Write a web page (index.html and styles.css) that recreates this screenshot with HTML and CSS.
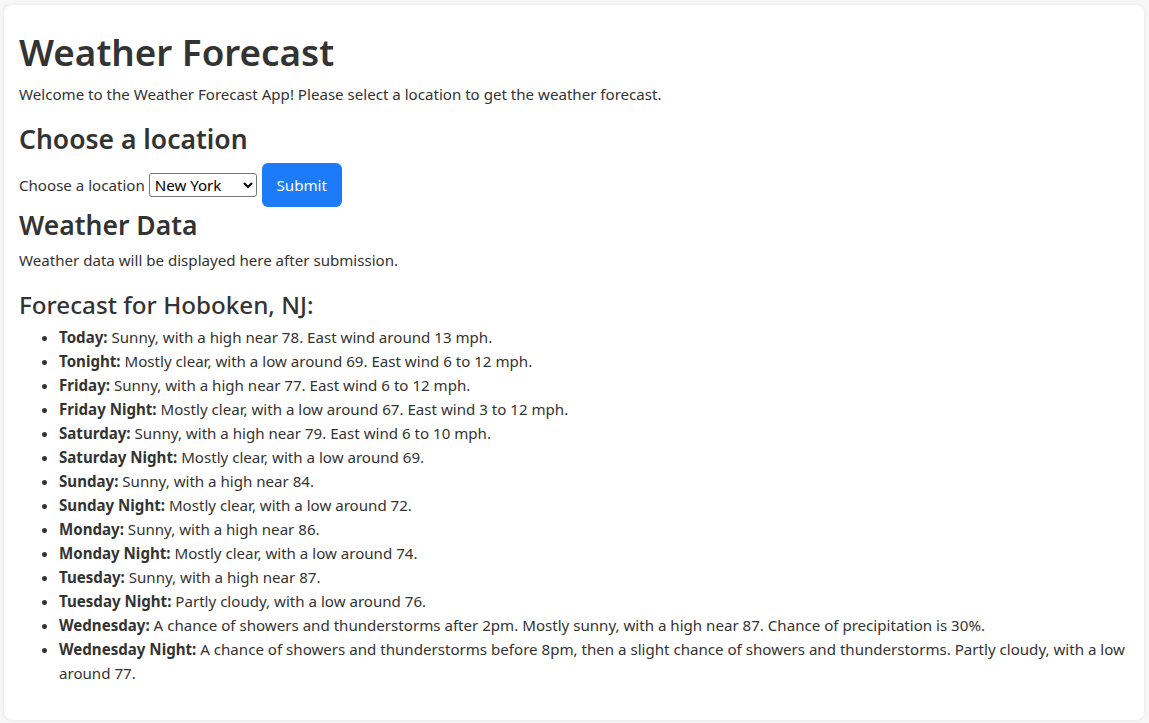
FILE: index.html
```html
<!DOCTYPE html>
<html lang="en">
<head>
<meta charset="utf-8">
<title>Weather Forecast</title>
<link rel="stylesheet" href="styles.css">
</head>
<body>
<main class="card">
  <h1 class="title">Weather Forecast</h1>
  <p class="intro">Welcome to the Weather Forecast App! Please select a location to get the weather forecast.</p>
  <h2 class="section section-choose">Choose a location</h2>
  <form class="loc-form">
    <label class="loc-label" for="loc">Choose a location</label>
    <select class="loc-select" id="loc">
      <option>New York</option>
      <option>Hoboken</option>
      <option>Chicago</option>
    </select>
    <button class="submit-btn" type="button">Submit</button>
  </form>
  <h2 class="section section-data">Weather Data</h2>
  <p class="data-note">Weather data will be displayed here after submission.</p>
  <h3 class="forecast-title">Forecast for Hoboken, NJ:</h3>
  <ul class="forecast-list">
    <li><strong>Today:</strong> Sunny, with a high near 78. East wind around 13 mph.</li>
    <li><strong>Tonight:</strong> Mostly clear, with a low around 69. East wind 6 to 12 mph.</li>
    <li><strong>Friday:</strong> Sunny, with a high near 77. East wind 6 to 12 mph.</li>
    <li><strong>Friday Night:</strong> Mostly clear, with a low around 67. East wind 3 to 12 mph.</li>
    <li><strong>Saturday:</strong> Sunny, with a high near 79. East wind 6 to 10 mph.</li>
    <li><strong>Saturday Night:</strong> Mostly clear, with a low around 69.</li>
    <li><strong>Sunday:</strong> Sunny, with a high near 84.</li>
    <li><strong>Sunday Night:</strong> Mostly clear, with a low around 72.</li>
    <li><strong>Monday:</strong> Sunny, with a high near 86.</li>
    <li><strong>Monday Night:</strong> Mostly clear, with a low around 74.</li>
    <li><strong>Tuesday:</strong> Sunny, with a high near 87.</li>
    <li><strong>Tuesday Night:</strong> Partly cloudy, with a low around 76.</li>
    <li><strong>Wednesday:</strong> A chance of showers and thunderstorms after 2pm. Mostly sunny, with a high near 87. Chance of precipitation is 30%.</li>
    <li><strong>Wednesday Night:</strong> A chance of showers and thunderstorms before 8pm, then a slight chance of showers and thunderstorms. Partly cloudy, with a low around 77.</li>
  </ul>
</main>
</body>
</html>
```

FILE: styles.css
```css
html, body {
  margin: 0;
  padding: 0;
}
body {
  background: #f7f7f7;
  font-family: "Noto Sans", "Open Sans", sans-serif;
  font-size: 15.1px;
  line-height: 24px;
  color: #333333;
  padding: 5px 5px 3px 4px;
}
.card {
  background: #ffffff;
  border-radius: 8px;
  box-shadow: 0 0 4px rgba(0, 0, 0, 0.08);
  padding: 23px 15px 19px;
}
.title {
  font-size: 36.8px;
  line-height: 48px;
  font-weight: 600;
  margin: 0 0 6px;
}
.intro {
  margin: 2px 0 16px;
}
.section {
  font-size: 26.5px;
  line-height: 34px;
  font-weight: 600;
  margin: 0;
}
.section-data {
  margin-top: 1px;
}
.loc-form {
  display: flex;
  align-items: center;
  margin-top: 7px;
  height: 44px;
}
.loc-label {
  margin-right: 4px;
}
.loc-select {
  font-family: inherit;
  font-size: 15.1px;
  color: #000;
  width: 108px;
  height: 24px;
  border: 1px solid #767676;
  border-radius: 3px;
  background: #fff;
  padding: 0 1px;
  margin-right: 5px;
}
.submit-btn {
  font-family: inherit;
  font-size: 15.1px;
  line-height: 24px;
  color: #ffffff;
  background: #1c7bf8;
  border: none;
  border-radius: 6px;
  height: 44px;
  width: 80px;
  padding: 0;
}
.data-note {
  margin: 6px 0 18px;
}
.forecast-title {
  font-size: 24.2px;
  line-height: 29px;
  font-weight: 500;
  margin: 0 0 6px;
}
.forecast-list {
  margin: 0 0 16px;
  padding-left: 40px;
}
.forecast-list strong {
  font-weight: 700;
}
```
